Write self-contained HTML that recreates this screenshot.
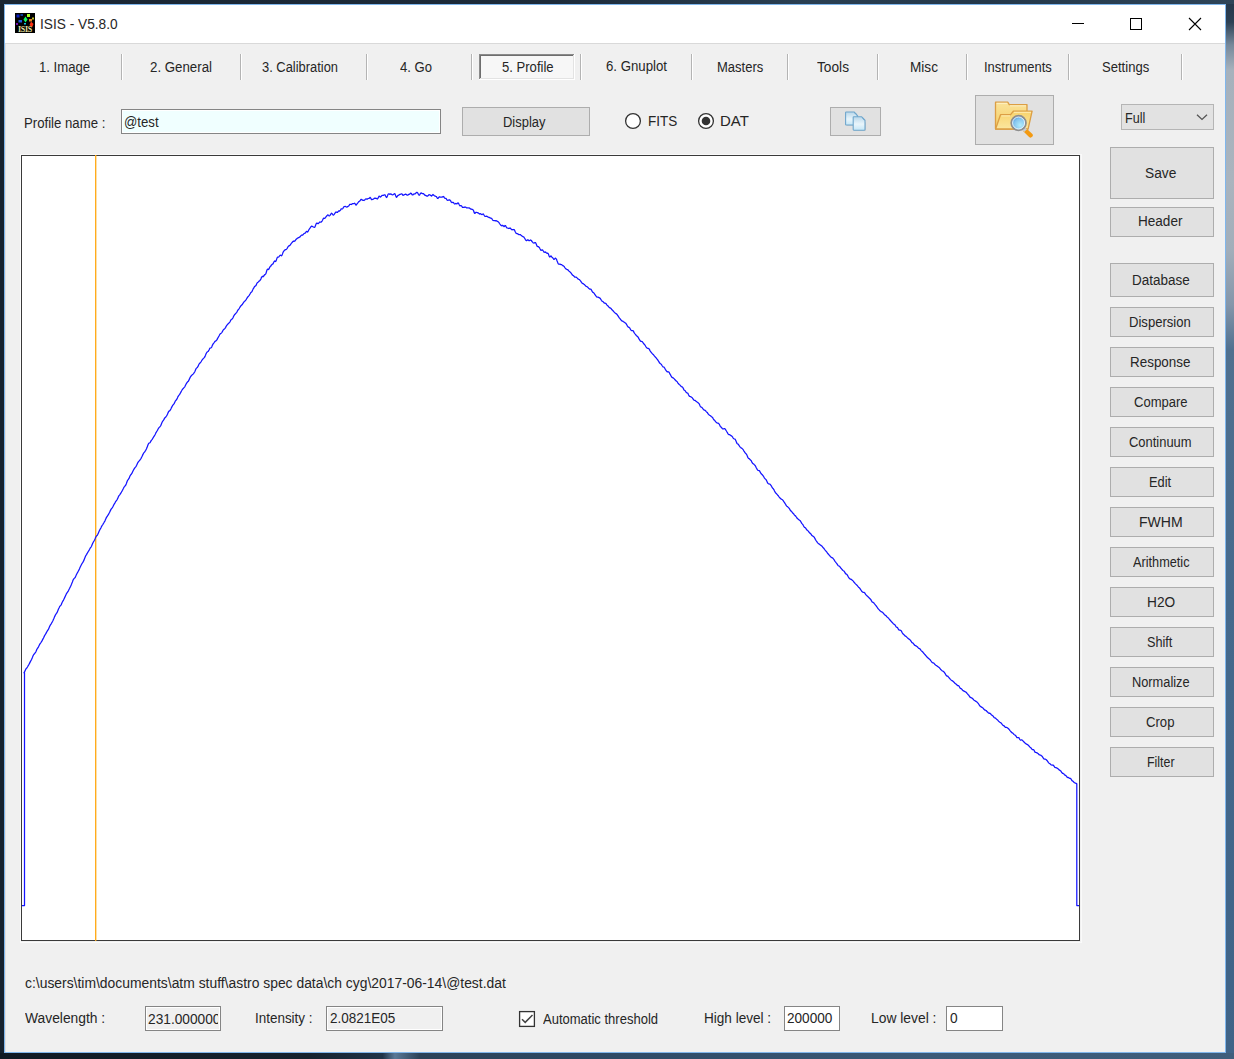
<!DOCTYPE html>
<html><head><meta charset="utf-8"><title>ISIS</title>
<style>
html,body{margin:0;padding:0;width:1234px;height:1059px;overflow:hidden;}
body{position:relative;background:#1b2a3a;}
.t{position:absolute;font-family:"Liberation Sans",sans-serif;white-space:pre;color:#262626;transform-origin:0 0;}
.a{position:absolute;box-sizing:border-box;}
.btn{position:absolute;box-sizing:border-box;border:1px solid #adadad;background:#e1e1e1;}
.sep{position:absolute;top:54px;width:2px;height:26px;border-left:1px solid #b4b4b4;border-right:1px solid #fff;box-sizing:border-box;}
.tb{position:absolute;box-sizing:border-box;border:1px solid #858585;box-shadow:inset 0 0 0 1px #fff;}
</style></head><body>
<!-- desktop background -->
<div class="a" style="left:0;top:0;width:1234px;height:1059px;background:linear-gradient(90deg,#16222e 0%,#1c2c3c 40%,#24394d 70%,#3a5572 100%);"></div>
<div class="a" style="left:1226px;top:0;width:8px;height:1059px;background:linear-gradient(180deg,#24364a 0px,#2c4054 22px,#76889a 45px,#a6b1bc 70px,#aab4be 180px,#a2aeba 250px,#8496aa 305px,#50708f 350px,#45698c 600px,#3f6387 1059px);"></div>
<div class="a" style="left:0;top:1053px;width:1234px;height:6px;background:linear-gradient(90deg,#101a24 0%,#15222e 25%,#1f3348 31%,#5a7896 32%,#2b4258 34%,#2e4a66 50%,#3b5a78 75%,#3f5e7c 100%);"></div>
<div class="a" style="left:0;top:0;width:1234px;height:4px;background:linear-gradient(90deg,#1a2633 0%,#1d2b3a 45%,#2a3f52 65%,#24384a 80%,#2e4458 100%);"></div>

<!-- window -->
<div class="a" style="left:4px;top:4px;width:1222px;height:1049px;border:1px solid #7fb6ec;background:#f0f0f0;"></div>
<div class="a" style="left:5px;top:5px;width:1220px;height:38px;background:#fff;"></div>
<div class="a" style="left:5px;top:43px;width:1220px;height:1px;background:#d9d9d9;"></div>
<div class="a" style="left:5px;top:44px;width:1px;height:1008px;background:#e3e0dc;"></div>

<!-- title icon -->
<svg class="a" style="left:15px;top:13px" width="20" height="20" viewBox="0 0 20 20">
<rect x="0" y="0" width="20" height="20" fill="#000"/>
<rect x="1.5" y="1.5" width="3" height="3" fill="#0a1fc0"/>
<rect x="5.5" y="1" width="2.5" height="2" fill="#0b3a9a"/>
<rect x="12" y="1" width="3" height="3" fill="#a8ff20"/>
<path d="M10.5 3.5 L12.5 6.5 L10.5 9.5 L8.5 6.5Z" fill="#10ff60"/>
<rect x="14" y="6" width="3" height="2.5" fill="#e08020"/>
<rect x="17" y="4.5" width="2" height="2" fill="#c0c020"/>
<rect x="3.5" y="7" width="3.5" height="2.5" fill="#1a5ae0"/>
<rect x="1" y="10" width="2" height="2" fill="#7010b0"/>
<rect x="9" y="10" width="2" height="1.5" fill="#10c0e0"/>
<path d="M16 8.5 L18.5 11 L17 14.5 L14.5 12Z" fill="#ff3010"/>
<text x="3" y="18.5" font-family="Liberation Serif" font-size="8" font-weight="bold" fill="#e8e0a0" letter-spacing="-0.3">ISIS</text>
</svg>

<!-- title bar buttons -->
<div class="a" style="left:1072px;top:23px;width:12px;height:1px;background:#000;"></div>
<div class="a" style="left:1130px;top:18px;width:12px;height:12px;border:1px solid #000;"></div>
<svg class="a" style="left:1188px;top:17px" width="14" height="14" viewBox="0 0 14 14"><path d="M1 1 L13 13 M13 1 L1 13" stroke="#000" stroke-width="1.1"/></svg>

<!-- tab separators -->
<div class="sep" style="left:121px"></div>
<div class="sep" style="left:240px"></div>
<div class="sep" style="left:366px"></div>
<div class="sep" style="left:471px"></div>
<div class="sep" style="left:580px"></div>
<div class="sep" style="left:691px"></div>
<div class="sep" style="left:787px"></div>
<div class="sep" style="left:877px"></div>
<div class="sep" style="left:966px"></div>
<div class="sep" style="left:1068px"></div>
<div class="sep" style="left:1181px"></div>

<!-- pressed tab -->
<div class="a" style="left:479px;top:54px;width:96px;height:26px;background:#fff;"></div>
<div class="a" style="left:479px;top:54px;width:95px;height:25px;background:#8a8a8a;"></div>
<div class="a" style="left:480px;top:55px;width:94px;height:24px;background:#e3e3e3;"></div>
<div class="a" style="left:480px;top:55px;width:93px;height:23px;background:#6e6e6e;"></div>
<div class="a" style="left:481px;top:56px;width:92px;height:22px;background:#f7f7f7;"></div>

<!-- profile name textbox -->
<div class="tb" style="left:121px;top:109px;width:320px;height:25px;background:#f0ffff;"></div>
<!-- Display button -->
<div class="btn" style="left:462px;top:107px;width:128px;height:29px;"></div>

<!-- radios -->
<svg class="a" style="left:624px;top:112px" width="18" height="18" viewBox="0 0 18 18"><circle cx="9" cy="9" r="7.4" fill="#fff" stroke="#333" stroke-width="1.3"/></svg>
<svg class="a" style="left:697px;top:112px" width="18" height="18" viewBox="0 0 18 18"><circle cx="9" cy="9" r="7.4" fill="#fff" stroke="#333" stroke-width="1.3"/><circle cx="9" cy="9" r="4.3" fill="#333"/></svg>

<!-- copy button -->
<div class="btn" style="left:830px;top:107px;width:51px;height:29px;"></div>
<svg class="a" style="left:843px;top:110px" width="25" height="23" viewBox="0 0 25 23">
<defs><linearGradient id="dg" x1="0" y1="0" x2="0" y2="1"><stop offset="0" stop-color="#b9d7ea"/><stop offset="0.55" stop-color="#e9f5fb"/><stop offset="1" stop-color="#c4e6f7"/></linearGradient></defs>
<path d="M3 3.5 H11 L14.5 7 V15 H3Z" fill="#000" opacity="0.12" transform="translate(0.8,0.8)"/>
<path d="M2.6 2.5 Q2.6 2 3.2 2 H11.2 L14.6 5.6 V14.4 Q14.6 15 14 15 H3.2 Q2.6 15 2.6 14.4Z" fill="url(#dg)" stroke="#6fa6cc" stroke-width="1.1"/>
<path d="M11.5 3 Q13.8 3.3 13.7 5.5" fill="none" stroke="#6fa6cc" stroke-width="0.9"/>
<path d="M10 8.5 H18.5 L22 12 V20 H10Z" fill="#000" opacity="0.12" transform="translate(0.8,0.8)"/>
<path d="M10.2 7.2 Q10.2 6.7 10.8 6.7 H18.6 L22 10.3 V19.6 Q22 20.2 21.4 20.2 H10.8 Q10.2 20.2 10.2 19.6Z" fill="url(#dg)" stroke="#6fa6cc" stroke-width="1.1"/>
<path d="M18.9 7.7 Q21.1 8 21.1 10.2" fill="none" stroke="#6fa6cc" stroke-width="0.9"/>
</svg>

<!-- folder button -->
<div class="btn" style="left:975px;top:95px;width:79px;height:50px;"></div>
<svg class="a" style="left:994px;top:100px" width="40" height="38" viewBox="0 0 40 38">
<defs>
<linearGradient id="fg" x1="0" y1="0" x2="0" y2="1"><stop offset="0" stop-color="#fbe39a"/><stop offset="1" stop-color="#f4cd62"/></linearGradient>
<linearGradient id="fg2" x1="0" y1="0" x2="0" y2="1"><stop offset="0" stop-color="#f8d36c"/><stop offset="1" stop-color="#fbe69e"/></linearGradient>
<radialGradient id="mg" cx="0.62" cy="0.65" r="0.7"><stop offset="0" stop-color="#b2ecfb"/><stop offset="0.6" stop-color="#86c6ee"/><stop offset="1" stop-color="#4d97e0"/></radialGradient>
</defs>
<path d="M1.5 2.2 H13.9 L15.2 4.6 H33 V29 H1.5Z" fill="url(#fg)" stroke="#dc9e44" stroke-width="1.3" stroke-linejoin="round"/>
<path d="M2.6 3.3 H13.2 M16 5.8 H32" stroke="#fff4cc" stroke-width="0.9"/>
<path d="M1.6 29 L6.5 14.7 H16.6 L19.4 11.1 H38.1 L34.1 29Z" fill="url(#fg2)" stroke="#dc9e44" stroke-width="1.3" stroke-linejoin="round"/>
<path d="M7.4 15.9 H16 M20 12.3 H37" stroke="#fff0c0" stroke-width="0.9"/>
<path d="M31 30 L36.6 35.3" stroke="#f39a12" stroke-width="4.4" stroke-linecap="round"/>
<path d="M29.6 28.6 L31.6 30.6" stroke="#c9cdd2" stroke-width="4" stroke-linecap="butt"/>
<circle cx="24.6" cy="23" r="7.3" fill="url(#mg)" stroke="#8e8e8e" stroke-width="1.9"/>
<circle cx="24.6" cy="23" r="6" fill="none" stroke="#eef6fb" stroke-width="0.9"/>
</svg>

<!-- combobox -->
<div class="a" style="left:1121px;top:104px;width:93px;height:26px;border:1px solid #b5b5b5;background:#e2e2e2;"></div>
<svg class="a" style="left:1195px;top:112px" width="14" height="10" viewBox="0 0 14 10"><path d="M2 2.8 L7 7.4 L12 2.8" fill="none" stroke="#555" stroke-width="1.3"/></svg>

<!-- right column buttons -->
<div class="btn" style="left:1110px;top:147px;width:104px;height:52px;"></div>
<div class="btn" style="left:1110px;top:207px;width:104px;height:30px;"></div>
<div class="btn" style="left:1110px;top:263px;width:104px;height:34px;"></div>
<div class="btn" style="left:1110px;top:307px;width:104px;height:30px;"></div>
<div class="btn" style="left:1110px;top:347px;width:104px;height:30px;"></div>
<div class="btn" style="left:1110px;top:387px;width:104px;height:30px;"></div>
<div class="btn" style="left:1110px;top:427px;width:104px;height:30px;"></div>
<div class="btn" style="left:1110px;top:467px;width:104px;height:30px;"></div>
<div class="btn" style="left:1110px;top:507px;width:104px;height:30px;"></div>
<div class="btn" style="left:1110px;top:547px;width:104px;height:30px;"></div>
<div class="btn" style="left:1110px;top:587px;width:104px;height:30px;"></div>
<div class="btn" style="left:1110px;top:627px;width:104px;height:30px;"></div>
<div class="btn" style="left:1110px;top:667px;width:104px;height:30px;"></div>
<div class="btn" style="left:1110px;top:707px;width:104px;height:30px;"></div>
<div class="btn" style="left:1110px;top:747px;width:104px;height:30px;"></div>

<!-- chart -->
<div class="a" style="left:20px;top:154px;width:1062px;height:789px;border:1px solid #fafafa;"></div>
<div class="a" style="left:21px;top:155px;width:1059px;height:786px;border:1px solid #3a3a3a;background:#fff;"></div>
<svg class="a" style="left:0;top:0" width="1234" height="1059" viewBox="0 0 1234 1059">
<line x1="95.7" y1="155" x2="95.7" y2="941" stroke="#ffaa18" stroke-width="1.35"/>
<polyline points="22,905.5 24.5,905.5 24.5,672.8 24.0,672.8 24.5,671.9 25.0,670.9 25.5,669.8 26.0,668.9 26.5,668.2 27.0,667.7 27.5,667.0 28.0,666.0 28.5,665.1 29.0,664.3 29.5,663.4 30.0,662.4 30.5,661.4 31.0,660.5 31.5,659.6 32.0,658.4 32.5,657.2 33.0,655.9 33.5,655.0 34.0,654.2 34.5,653.7 35.0,653.0 35.5,652.5 36.0,651.5 36.5,650.3 37.0,649.1 37.5,648.4 38.0,647.6 38.5,646.8 39.0,645.7 39.5,644.7 40.0,643.9 40.5,643.2 41.0,642.5 41.5,641.7 42.0,640.9 42.5,639.9 43.0,638.9 43.5,638.0 44.0,636.9 44.5,635.9 45.0,635.0 45.5,634.2 46.0,633.4 46.5,632.4 47.0,631.5 47.5,630.6 48.0,630.0 48.5,629.2 49.0,628.0 49.5,626.8 50.0,625.7 50.5,624.9 51.0,624.1 51.5,623.2 52.0,622.4 52.5,621.5 53.0,620.5 53.5,619.3 54.0,618.2 54.5,616.9 55.0,615.9 55.5,614.8 56.0,614.0 56.5,613.4 57.0,612.7 57.5,611.6 58.0,610.3 58.5,609.0 59.0,608.0 59.5,606.9 60.0,606.2 60.5,605.6 61.0,605.1 61.5,604.1 62.0,602.8 62.5,601.8 63.0,600.9 63.5,600.1 64.0,599.0 64.5,597.9 65.0,596.9 65.5,595.8 66.0,594.7 66.5,593.6 67.0,592.8 67.5,592.1 68.0,591.5 68.5,590.6 69.0,589.5 69.5,588.5 70.0,587.4 70.5,586.6 71.0,585.4 71.5,584.3 72.0,582.9 72.5,581.7 73.0,580.3 73.5,579.3 74.0,578.6 74.5,578.1 75.0,577.7 75.5,576.9 76.0,575.6 76.5,574.5 77.0,573.5 77.5,572.7 78.0,571.7 78.5,570.8 79.0,569.9 79.5,568.8 80.0,567.6 80.5,566.5 81.0,565.5 81.5,564.5 82.0,563.7 82.5,562.8 83.0,562.2 83.5,561.1 84.0,560.1 84.5,558.7 85.0,557.5 85.5,556.3 86.0,555.3 86.5,554.6 87.0,553.6 87.5,552.9 88.0,551.9 88.5,551.3 89.0,550.4 89.5,549.5 90.0,548.5 90.5,547.7 91.0,547.1 91.5,546.2 92.0,545.1 92.5,543.8 93.0,542.7 93.5,541.8 94.0,541.0 94.5,540.0 95.0,538.9 95.5,537.7 96.0,536.8 96.5,536.0 97.0,535.6 97.5,534.8 98.0,533.9 98.5,532.7 99.0,531.5 99.5,530.4 100.0,529.5 100.5,528.7 101.0,527.7 101.5,526.6 102.0,525.7 102.5,525.0 103.0,524.3 103.5,523.3 104.0,522.5 104.5,521.6 105.0,520.8 105.5,519.6 106.0,518.4 106.5,517.4 107.0,516.6 107.5,516.0 108.0,515.2 108.5,514.4 109.0,513.3 109.5,512.5 110.0,511.4 110.5,510.4 111.0,509.4 111.5,508.7 112.0,508.1 112.5,507.3 113.0,506.5 113.5,505.4 114.0,504.5 114.5,503.6 115.0,502.8 115.5,501.9 116.0,501.2 116.5,500.5 117.0,499.8 117.5,498.9 118.0,497.7 118.5,496.5 119.0,495.6 119.5,495.1 120.0,494.4 120.5,493.6 121.0,492.8 121.5,492.0 122.0,491.2 122.5,490.3 123.0,489.2 123.5,488.3 124.0,487.2 124.5,486.6 125.0,485.9 125.5,485.5 126.0,484.6 126.5,483.3 127.0,481.8 127.5,480.5 128.0,479.8 128.5,479.1 129.0,478.4 129.5,477.2 130.0,476.0 130.5,475.1 131.0,474.5 131.5,474.0 132.0,473.2 132.5,472.1 133.0,471.0 133.5,470.0 134.0,469.1 134.5,468.3 135.0,467.6 135.5,467.1 136.0,466.4 136.5,465.6 137.0,464.4 137.5,463.3 138.0,462.4 138.5,461.7 139.0,461.1 139.5,460.4 140.0,460.0 140.5,459.2 141.0,458.6 141.5,457.4 142.0,456.5 142.5,455.4 143.0,454.4 143.5,453.3 144.0,452.7 144.5,452.1 145.0,451.3 145.5,450.6 146.0,449.7 146.5,448.8 147.0,447.6 147.5,446.2 148.0,444.8 148.5,443.7 149.0,443.1 149.5,443.0 150.0,442.7 150.5,441.9 151.0,440.9 151.5,440.1 152.0,439.6 152.5,438.9 153.0,438.0 153.5,437.1 154.0,436.4 154.5,435.7 155.0,434.8 155.5,433.8 156.0,432.6 156.5,431.9 157.0,431.0 157.5,430.3 158.0,429.2 158.5,428.3 159.0,427.6 159.5,427.1 160.0,426.7 160.5,426.0 161.0,425.1 161.5,423.8 162.0,422.6 162.5,421.5 163.0,420.8 163.5,420.1 164.0,419.4 164.5,418.4 165.0,417.7 165.5,417.2 166.0,416.7 166.5,416.0 167.0,415.1 167.5,414.2 168.0,412.9 168.5,411.9 169.0,411.1 169.5,410.9 170.0,410.5 170.5,409.7 171.0,408.7 171.5,407.6 172.0,406.6 172.5,405.7 173.0,405.0 173.5,404.4 174.0,403.9 174.5,402.9 175.0,401.8 175.5,400.8 176.0,400.2 176.5,399.7 177.0,398.9 177.5,397.8 178.0,396.6 178.5,395.8 179.0,395.2 179.5,394.6 180.0,393.7 180.5,392.9 181.0,391.9 181.5,391.0 182.0,390.0 182.5,389.3 183.0,388.7 183.5,388.2 184.0,387.6 184.5,387.1 185.0,386.3 185.5,385.3 186.0,384.3 186.5,383.4 187.0,382.6 187.5,382.0 188.0,381.6 188.5,381.0 189.0,379.9 189.5,378.9 190.0,377.7 190.5,376.9 191.0,376.1 191.5,375.5 192.0,375.1 192.5,374.6 193.0,374.2 193.5,373.6 194.0,372.9 194.5,372.1 195.0,371.2 195.5,370.0 196.0,368.8 196.5,368.0 197.0,367.7 197.5,367.3 198.0,366.4 198.5,365.2 199.0,364.2 199.5,363.5 200.0,363.1 200.5,362.5 201.0,361.8 201.5,361.0 202.0,360.2 202.5,359.5 203.0,358.9 203.5,358.4 204.0,357.9 204.5,357.4 205.0,356.4 205.5,355.2 206.0,353.9 206.5,353.0 207.0,352.2 207.5,351.8 208.0,351.5 208.5,351.0 209.0,350.0 209.5,348.9 210.0,348.2 210.5,348.0 211.0,347.9 211.5,347.4 212.0,346.3 212.5,345.1 213.0,344.1 213.5,343.4 214.0,342.8 214.5,342.0 215.0,341.5 215.5,341.0 216.0,340.8 216.5,340.3 217.0,339.6 217.5,338.6 218.0,337.7 218.5,336.9 219.0,336.0 219.5,335.0 220.0,334.2 220.5,333.6 221.0,333.3 221.5,332.9 222.0,332.3 222.5,331.4 223.0,330.3 223.5,329.7 224.0,329.2 224.5,328.9 225.0,328.3 225.5,327.6 226.0,326.6 226.5,325.7 227.0,325.1 227.5,324.5 228.0,324.0 228.5,323.3 229.0,323.0 229.5,322.5 230.0,321.8 230.5,320.7 231.0,319.9 231.5,319.3 232.0,319.2 232.5,318.5 233.0,317.8 233.5,316.5 234.0,315.6 234.5,314.7 235.0,314.2 235.5,313.8 236.0,313.2 236.5,312.6 237.0,311.8 237.5,310.9 238.0,310.0 238.5,309.4 239.0,308.8 239.5,308.0 240.0,307.2 240.5,306.4 241.0,305.7 241.5,305.2 242.0,304.7 242.5,304.2 243.0,303.3 243.5,302.6 244.0,301.9 244.5,301.3 245.0,301.0 245.5,300.4 246.0,299.9 246.5,299.0 247.0,298.2 247.5,297.4 248.0,296.7 248.5,296.2 249.0,295.6 249.5,294.9 250.0,294.0 250.5,292.9 251.0,292.5 251.5,292.1 252.0,291.6 252.5,290.3 253.0,289.3 253.5,288.2 254.0,287.7 254.5,286.6 255.0,286.2 255.5,285.9 256.0,285.5 256.5,284.3 257.0,283.2 257.5,282.5 258.0,282.2 258.5,281.8 259.0,281.3 259.5,280.8 260.0,280.4 260.5,279.6 261.0,278.8 261.5,277.3 262.0,276.7 262.5,276.3 263.0,276.8 263.5,276.3 264.0,275.8 264.5,274.9 265.0,274.6 265.5,274.1 266.0,273.3 266.5,271.5 267.0,270.0 267.5,269.2 268.0,269.3 268.5,269.5 269.0,268.9 269.5,267.7 270.0,266.9 270.5,266.2 271.0,266.0 271.5,264.8 272.0,264.6 272.5,264.0 273.0,263.9 273.5,262.7 274.0,261.8 274.5,261.0 275.0,261.2 275.5,261.5 276.0,261.1 276.5,259.6 277.0,258.1 277.5,257.2 278.0,257.1 278.5,257.1 279.0,256.7 279.5,256.0 280.0,255.3 280.5,255.2 281.0,255.5 281.5,255.8 282.0,255.2 282.5,253.9 283.0,252.5 283.5,251.5 284.0,250.9 284.5,250.3 285.0,249.9 285.5,249.6 286.0,249.6 286.5,249.2 287.0,248.6 287.5,247.7 288.0,246.8 288.5,246.1 289.0,245.9 289.5,245.7 290.0,245.3 290.5,244.7 291.0,243.8 291.5,243.2 292.0,242.6 292.5,242.0 293.0,241.5 293.5,241.1 294.0,241.3 294.5,241.2 295.0,240.9 295.5,240.1 296.0,239.5 296.5,238.9 297.0,238.6 297.5,238.2 298.0,238.0 298.5,237.5 299.0,237.5 299.5,237.1 300.0,236.9 300.5,236.1 301.0,235.7 301.5,235.1 302.0,235.2 302.5,235.1 303.0,234.8 303.5,234.2 304.0,233.5 304.5,233.3 305.0,233.2 305.5,232.7 306.0,232.0 306.5,231.4 307.0,231.7 307.5,232.0 308.0,231.5 308.5,230.5 309.0,229.5 309.5,228.8 310.0,228.1 310.5,227.2 311.0,226.7 311.5,226.1 312.0,226.3 312.5,226.4 313.0,226.9 313.5,227.0 314.0,227.3 314.5,227.3 315.0,226.9 315.5,225.5 316.0,224.1 316.5,223.2 317.0,223.2 317.5,223.4 318.0,223.7 318.5,223.4 319.0,222.9 319.5,222.2 320.0,222.0 320.5,222.1 321.0,222.2 321.5,221.8 322.0,221.1 322.5,220.2 323.0,219.2 323.5,218.4 324.0,218.1 324.5,218.3 325.0,218.1 325.5,217.7 326.0,216.7 326.5,216.3 327.0,215.6 327.5,215.1 328.0,214.8 328.5,215.4 329.0,215.9 329.5,215.9 330.0,215.4 330.5,214.6 331.0,213.9 331.5,213.2 332.0,213.5 332.5,214.2 333.0,215.0 333.5,215.1 334.0,214.6 334.5,213.9 335.0,213.1 335.5,212.5 336.0,212.0 336.5,212.2 337.0,212.4 337.5,212.4 338.0,211.6 338.5,211.1 339.0,210.8 339.5,211.1 340.0,210.6 340.5,210.1 341.0,209.1 341.5,208.8 342.0,208.8 342.5,208.9 343.0,208.3 343.5,207.3 344.0,206.8 344.5,206.5 345.0,206.4 345.5,206.4 346.0,206.9 346.5,207.0 347.0,207.0 347.5,206.5 348.0,206.5 348.5,206.1 349.0,205.7 349.5,204.8 350.0,204.3 350.5,204.3 351.0,204.4 351.5,204.5 352.0,204.1 352.5,203.7 353.0,203.6 353.5,203.5 354.0,203.5 354.5,203.2 355.0,203.6 355.5,204.5 356.0,205.1 356.5,204.8 357.0,203.9 357.5,203.3 358.0,202.7 358.5,202.0 359.0,201.5 359.5,201.2 360.0,200.8 360.5,200.0 361.0,199.4 361.5,199.3 362.0,199.9 362.5,200.1 363.0,200.3 363.5,200.3 364.0,200.5 364.5,200.1 365.0,199.7 365.5,199.0 366.0,198.9 366.5,198.9 367.0,199.3 367.5,199.0 368.0,198.6 368.5,198.5 369.0,198.3 369.5,198.1 370.0,197.4 370.5,197.7 371.0,198.6 371.5,199.7 372.0,199.6 372.5,199.5 373.0,199.2 373.5,199.1 374.0,198.6 374.5,198.2 375.0,198.3 375.5,198.2 376.0,198.3 376.5,198.3 377.0,198.9 377.5,199.0 378.0,198.2 378.5,197.2 379.0,196.2 379.5,196.4 380.0,196.7 380.5,197.0 381.0,196.5 381.5,196.0 382.0,195.4 382.5,195.4 383.0,195.3 383.5,195.4 384.0,194.9 384.5,194.8 385.0,194.9 385.5,195.9 386.0,196.8 386.5,197.5 387.0,197.0 387.5,195.8 388.0,194.4 388.5,193.8 389.0,193.9 389.5,194.1 390.0,194.3 390.5,193.9 391.0,194.2 391.5,194.2 392.0,194.7 392.5,194.8 393.0,194.8 393.5,194.5 394.0,194.0 394.5,193.7 395.0,193.9 395.5,195.2 396.0,196.6 396.5,197.3 397.0,196.8 397.5,196.0 398.0,195.4 398.5,195.3 399.0,194.9 399.5,194.7 400.0,194.3 400.5,194.3 401.0,194.0 401.5,193.8 402.0,194.0 402.5,194.6 403.0,195.3 403.5,195.1 404.0,195.0 404.5,194.6 405.0,194.4 405.5,194.1 406.0,194.3 406.5,194.6 407.0,195.1 407.5,195.0 408.0,195.0 408.5,194.4 409.0,194.4 409.5,194.0 410.0,194.0 410.5,193.2 411.0,193.3 411.5,193.6 412.0,194.7 412.5,194.9 413.0,194.9 413.5,194.2 414.0,194.1 414.5,193.9 415.0,193.9 415.5,193.5 416.0,192.9 416.5,192.4 417.0,192.4 417.5,192.7 418.0,193.5 418.5,194.5 419.0,195.2 419.5,195.2 420.0,194.3 420.5,193.4 421.0,192.9 421.5,193.1 422.0,193.4 422.5,193.6 423.0,193.6 423.5,193.7 424.0,194.3 424.5,194.8 425.0,195.3 425.5,195.4 426.0,195.7 426.5,195.9 427.0,196.2 427.5,196.1 428.0,195.8 428.5,195.2 429.0,194.7 429.5,194.8 430.0,194.9 430.5,195.4 431.0,195.6 431.5,196.1 432.0,195.5 432.5,194.9 433.0,194.5 433.5,194.9 434.0,195.5 434.5,195.8 435.0,196.1 435.5,196.2 436.0,196.5 436.5,196.7 437.0,197.6 437.5,198.3 438.0,198.5 438.5,197.6 439.0,197.1 439.5,196.8 440.0,197.2 440.5,197.1 441.0,197.2 441.5,197.1 442.0,197.1 442.5,196.9 443.0,196.6 443.5,196.5 444.0,197.0 444.5,197.8 445.0,198.4 445.5,198.4 446.0,198.4 446.5,199.1 447.0,200.0 447.5,200.3 448.0,200.3 448.5,200.0 449.0,200.1 449.5,199.8 450.0,200.1 450.5,200.6 451.0,201.8 451.5,202.3 452.0,202.6 452.5,202.3 453.0,202.3 453.5,202.5 454.0,203.3 454.5,204.0 455.0,203.9 455.5,203.5 456.0,203.4 456.5,203.8 457.0,203.8 457.5,203.2 458.0,202.9 458.5,203.2 459.0,204.2 459.5,205.1 460.0,205.8 460.5,205.7 461.0,205.7 461.5,205.8 462.0,206.7 462.5,207.4 463.0,207.5 463.5,207.4 464.0,207.2 464.5,207.3 465.0,207.0 465.5,207.2 466.0,207.4 466.5,207.9 467.0,207.8 467.5,207.9 468.0,207.9 468.5,208.0 469.0,207.9 469.5,208.1 470.0,208.5 470.5,208.9 471.0,209.1 471.5,209.2 472.0,209.4 472.5,209.4 473.0,209.8 473.5,210.5 474.0,212.1 474.5,213.1 475.0,213.4 475.5,212.7 476.0,212.3 476.5,212.3 477.0,212.5 477.5,212.8 478.0,212.6 478.5,213.2 479.0,213.5 479.5,214.0 480.0,213.7 480.5,213.7 481.0,214.0 481.5,214.5 482.0,214.6 482.5,214.3 483.0,213.9 483.5,214.0 484.0,215.0 484.5,215.8 485.0,216.4 485.5,216.4 486.0,216.4 486.5,216.2 487.0,216.3 487.5,216.5 488.0,217.2 488.5,217.2 489.0,217.5 489.5,217.4 490.0,217.8 490.5,218.2 491.0,218.2 491.5,218.3 492.0,218.9 492.5,219.8 493.0,220.4 493.5,220.5 494.0,220.5 494.5,220.6 495.0,220.6 495.5,220.8 496.0,220.7 496.5,220.9 497.0,221.1 497.5,221.5 498.0,221.7 498.5,222.1 499.0,222.6 499.5,223.5 500.0,224.2 500.5,224.8 501.0,225.4 501.5,225.6 502.0,225.8 502.5,225.3 503.0,225.6 503.5,226.0 504.0,226.7 504.5,226.3 505.0,225.5 505.5,225.6 506.0,226.5 506.5,227.5 507.0,227.9 507.5,228.0 508.0,228.2 508.5,228.5 509.0,228.4 509.5,228.4 510.0,227.8 510.5,228.5 511.0,228.8 511.5,229.6 512.0,229.6 512.5,229.7 513.0,229.8 513.5,229.5 514.0,229.6 514.5,230.0 515.0,231.2 515.5,232.3 516.0,233.2 516.5,233.4 517.0,233.6 517.5,233.6 518.0,234.1 518.5,234.4 519.0,234.7 519.5,234.6 520.0,234.6 520.5,234.7 521.0,235.2 521.5,235.5 522.0,236.2 522.5,236.3 523.0,236.7 523.5,236.8 524.0,237.3 524.5,238.0 525.0,238.8 525.5,239.8 526.0,240.4 526.5,240.7 527.0,240.2 527.5,239.9 528.0,239.8 528.5,240.3 529.0,240.7 529.5,240.6 530.0,240.4 530.5,240.0 531.0,240.3 531.5,240.6 532.0,241.6 532.5,242.0 533.0,242.7 533.5,243.0 534.0,243.1 534.5,242.8 535.0,242.5 535.5,242.6 536.0,243.5 536.5,244.7 537.0,246.1 537.5,246.4 538.0,246.7 538.5,246.6 539.0,247.3 539.5,247.8 540.0,248.8 540.5,249.7 541.0,250.4 541.5,250.2 542.0,250.1 542.5,249.9 543.0,250.6 543.5,251.2 544.0,252.1 544.5,252.2 545.0,252.4 545.5,252.0 546.0,252.5 546.5,252.9 547.0,253.3 547.5,253.2 548.0,253.3 548.5,254.2 549.0,255.8 549.5,256.9 550.0,256.9 550.5,256.2 551.0,256.0 551.5,256.5 552.0,257.3 552.5,257.6 553.0,258.2 553.5,259.0 554.0,259.4 554.5,259.0 555.0,258.5 555.5,258.1 556.0,258.7 556.5,259.3 557.0,260.7 557.5,261.9 558.0,263.4 558.5,264.0 559.0,264.3 559.5,264.2 560.0,264.2 560.5,264.4 561.0,264.6 561.5,264.6 562.0,265.0 562.5,265.3 563.0,265.8 563.5,265.9 564.0,266.4 564.5,267.0 565.0,267.8 565.5,268.4 566.0,269.0 566.5,269.2 567.0,269.5 567.5,269.5 568.0,270.0 568.5,270.5 569.0,271.2 569.5,271.5 570.0,271.9 570.5,272.4 571.0,273.0 571.5,273.7 572.0,274.5 572.5,275.1 573.0,275.5 573.5,275.7 574.0,276.2 574.5,276.9 575.0,277.2 575.5,277.2 576.0,277.2 576.5,277.4 577.0,277.9 577.5,278.4 578.0,279.0 578.5,279.2 579.0,279.5 579.5,279.7 580.0,280.3 580.5,280.9 581.0,281.6 581.5,282.4 582.0,283.0 582.5,283.4 583.0,283.6 583.5,283.9 584.0,284.3 584.5,284.6 585.0,285.2 585.5,285.7 586.0,286.2 586.5,286.5 587.0,286.7 587.5,287.0 588.0,287.4 588.5,288.1 589.0,288.6 589.5,289.0 590.0,289.0 590.5,289.0 591.0,289.3 591.5,290.1 592.0,291.2 592.5,292.0 593.0,292.4 593.5,292.6 594.0,293.2 594.5,294.0 595.0,294.6 595.5,295.3 596.0,296.0 596.5,296.8 597.0,297.0 597.5,297.1 598.0,297.2 598.5,297.4 599.0,297.6 599.5,297.8 600.0,298.3 600.5,298.8 601.0,299.7 601.5,300.5 602.0,301.2 602.5,301.3 603.0,301.6 603.5,302.1 604.0,302.8 604.5,303.2 605.0,303.2 605.5,303.3 606.0,303.6 606.5,304.3 607.0,305.1 607.5,305.6 608.0,306.0 608.5,306.5 609.0,307.2 609.5,307.7 610.0,307.9 610.5,308.1 611.0,308.5 611.5,309.1 612.0,309.8 612.5,310.2 613.0,310.8 613.5,311.3 614.0,311.9 614.5,312.3 615.0,312.9 615.5,313.3 616.0,313.7 616.5,313.9 617.0,314.5 617.5,315.1 618.0,315.9 618.5,316.7 619.0,317.5 619.5,318.1 620.0,318.6 620.5,319.3 621.0,320.0 621.5,320.6 622.0,320.9 622.5,321.1 623.0,321.3 623.5,321.7 624.0,322.0 624.5,322.5 625.0,322.8 625.5,323.1 626.0,323.5 626.5,324.3 627.0,325.3 627.5,326.3 628.0,326.9 628.5,327.1 629.0,327.4 629.5,327.7 630.0,328.5 630.5,329.3 631.0,330.1 631.5,330.6 632.0,330.7 632.5,330.6 633.0,330.7 633.5,331.4 634.0,332.4 634.5,333.3 635.0,333.9 635.5,334.4 636.0,335.1 636.5,335.8 637.0,336.1 637.5,336.5 638.0,337.0 638.5,337.9 639.0,338.9 639.5,339.7 640.0,340.5 640.5,341.1 641.0,341.3 641.5,341.4 642.0,341.5 642.5,342.0 643.0,342.7 643.5,343.5 644.0,344.0 644.5,344.5 645.0,345.2 645.5,346.0 646.0,346.8 646.5,347.5 647.0,348.0 647.5,348.3 648.0,348.4 648.5,348.4 649.0,348.8 649.5,349.6 650.0,350.6 650.5,351.5 651.0,352.1 651.5,352.7 652.0,353.3 652.5,353.9 653.0,354.3 653.5,354.8 654.0,355.4 654.5,356.1 655.0,356.7 655.5,357.3 656.0,357.7 656.5,358.3 657.0,359.0 657.5,359.8 658.0,360.3 658.5,361.2 659.0,361.9 659.5,362.9 660.0,363.2 660.5,363.7 661.0,364.0 661.5,364.7 662.0,365.5 662.5,366.2 663.0,366.8 663.5,367.0 664.0,367.2 664.5,367.8 665.0,368.7 665.5,369.6 666.0,370.4 666.5,371.0 667.0,371.6 667.5,371.9 668.0,371.9 668.5,371.8 669.0,372.2 669.5,373.0 670.0,374.2 670.5,374.9 671.0,375.9 671.5,376.6 672.0,377.4 672.5,377.6 673.0,377.8 673.5,378.1 674.0,378.6 674.5,379.1 675.0,379.8 675.5,380.3 676.0,380.9 676.5,381.1 677.0,381.6 677.5,382.2 678.0,383.1 678.5,383.8 679.0,384.2 679.5,384.7 680.0,385.0 680.5,385.7 681.0,386.3 681.5,386.7 682.0,386.8 682.5,387.0 683.0,387.8 683.5,388.9 684.0,389.9 684.5,390.3 685.0,390.6 685.5,391.1 686.0,392.1 686.5,392.7 687.0,392.9 687.5,393.0 688.0,393.5 688.5,394.7 689.0,395.8 689.5,396.3 690.0,396.5 690.5,396.6 691.0,396.8 691.5,397.2 692.0,397.5 692.5,398.2 693.0,398.9 693.5,399.7 694.0,400.1 694.5,400.3 695.0,400.4 695.5,400.7 696.0,401.2 696.5,401.6 697.0,402.0 697.5,402.3 698.0,402.7 698.5,403.1 699.0,403.7 699.5,404.4 700.0,405.7 700.5,406.6 701.0,407.1 701.5,407.2 702.0,407.6 702.5,408.2 703.0,408.9 703.5,409.5 704.0,410.0 704.5,410.1 705.0,410.3 705.5,410.7 706.0,411.4 706.5,411.9 707.0,412.3 707.5,412.8 708.0,413.6 708.5,414.3 709.0,414.8 709.5,415.2 710.0,415.5 710.5,415.8 711.0,416.2 711.5,416.7 712.0,417.0 712.5,417.4 713.0,418.3 713.5,419.1 714.0,420.0 714.5,420.2 715.0,420.9 715.5,421.3 716.0,422.1 716.5,422.6 717.0,423.0 717.5,423.1 718.0,423.2 718.5,423.4 719.0,423.9 719.5,424.6 720.0,425.9 720.5,426.6 721.0,427.2 721.5,427.4 722.0,428.2 722.5,428.7 723.0,429.0 723.5,428.9 724.0,428.7 724.5,428.7 725.0,428.9 725.5,429.5 726.0,430.3 726.5,431.0 727.0,432.0 727.5,432.9 728.0,433.8 728.5,434.4 729.0,434.6 729.5,434.7 730.0,434.9 730.5,435.3 731.0,435.7 731.5,435.9 732.0,436.3 732.5,436.9 733.0,437.8 733.5,438.5 734.0,438.8 734.5,439.0 735.0,439.2 735.5,439.9 736.0,441.0 736.5,442.4 737.0,443.4 737.5,443.8 738.0,444.0 738.5,444.6 739.0,445.3 739.5,446.1 740.0,446.8 740.5,447.4 741.0,447.9 741.5,448.1 742.0,448.5 742.5,448.8 743.0,449.5 743.5,450.2 744.0,451.1 744.5,451.9 745.0,452.7 745.5,453.3 746.0,453.7 746.5,454.3 747.0,455.3 747.5,456.6 748.0,457.6 748.5,458.3 749.0,458.5 749.5,459.1 750.0,459.5 750.5,460.0 751.0,460.4 751.5,461.3 752.0,462.4 752.5,463.2 753.0,463.6 753.5,463.9 754.0,464.3 754.5,464.9 755.0,465.3 755.5,466.1 756.0,467.2 756.5,468.1 757.0,469.2 757.5,469.8 758.0,470.4 758.5,470.5 759.0,470.6 759.5,470.9 760.0,471.7 760.5,472.7 761.0,473.5 761.5,474.1 762.0,474.5 762.5,475.0 763.0,475.6 763.5,476.3 764.0,477.2 764.5,478.1 765.0,478.7 765.5,479.1 766.0,479.6 766.5,480.4 767.0,481.5 767.5,482.7 768.0,483.5 768.5,483.8 769.0,483.9 769.5,484.0 770.0,484.3 770.5,484.8 771.0,485.4 771.5,486.3 772.0,487.1 772.5,488.0 773.0,488.4 773.5,489.1 774.0,489.8 774.5,491.0 775.0,491.9 775.5,492.8 776.0,493.2 776.5,493.7 777.0,494.3 777.5,494.9 778.0,495.6 778.5,496.0 779.0,496.8 779.5,497.4 780.0,498.1 780.5,498.5 781.0,498.9 781.5,499.2 782.0,499.5 782.5,499.8 783.0,500.4 783.5,501.1 784.0,501.9 784.5,502.6 785.0,503.4 785.5,504.1 786.0,505.2 786.5,505.9 787.0,506.3 787.5,506.6 788.0,507.1 788.5,507.6 789.0,508.1 789.5,508.9 790.0,509.7 790.5,510.6 791.0,510.9 791.5,511.5 792.0,512.0 792.5,512.7 793.0,513.2 793.5,513.7 794.0,514.4 794.5,515.1 795.0,515.6 795.5,515.9 796.0,516.6 796.5,517.2 797.0,518.1 797.5,518.4 798.0,519.0 798.5,519.4 799.0,519.9 799.5,520.2 800.0,520.5 800.5,521.1 801.0,522.0 801.5,523.0 802.0,523.6 802.5,524.1 803.0,524.8 803.5,525.8 804.0,526.6 804.5,527.3 805.0,527.5 805.5,527.9 806.0,528.6 806.5,529.5 807.0,530.1 807.5,530.5 808.0,530.8 808.5,531.4 809.0,532.1 809.5,532.9 810.0,533.1 810.5,533.5 811.0,534.1 811.5,535.0 812.0,535.6 812.5,536.0 813.0,536.2 813.5,536.5 814.0,537.0 814.5,537.7 815.0,538.6 815.5,539.6 816.0,540.5 816.5,541.2 817.0,541.9 817.5,542.6 818.0,543.2 818.5,543.6 819.0,543.9 819.5,544.3 820.0,544.7 820.5,545.1 821.0,545.4 821.5,545.8 822.0,546.2 822.5,546.9 823.0,547.5 823.5,548.0 824.0,548.5 824.5,549.3 825.0,550.0 825.5,550.7 826.0,551.1 826.5,551.7 827.0,552.3 827.5,553.1 828.0,553.8 828.5,554.3 829.0,554.9 829.5,555.5 830.0,556.0 830.5,556.7 831.0,557.1 831.5,557.5 832.0,557.5 832.5,557.9 833.0,558.3 833.5,559.0 834.0,559.7 834.5,560.5 835.0,561.3 835.5,561.9 836.0,562.6 836.5,563.2 837.0,563.9 837.5,564.7 838.0,565.4 838.5,565.8 839.0,566.0 839.5,566.3 840.0,566.9 840.5,567.7 841.0,568.3 841.5,568.8 842.0,569.4 842.5,570.1 843.0,570.5 843.5,570.8 844.0,571.0 844.5,571.8 845.0,572.6 845.5,573.6 846.0,573.9 846.5,574.2 847.0,574.6 847.5,575.3 848.0,576.3 848.5,577.1 849.0,578.0 849.5,578.4 850.0,579.0 850.5,579.1 851.0,579.3 851.5,579.4 852.0,580.0 852.5,580.4 853.0,580.9 853.5,581.4 854.0,582.2 854.5,582.7 855.0,583.4 855.5,583.9 856.0,584.4 856.5,584.9 857.0,585.2 857.5,585.8 858.0,586.5 858.5,587.2 859.0,587.6 859.5,588.0 860.0,588.6 860.5,589.4 861.0,590.2 861.5,590.8 862.0,591.6 862.5,592.0 863.0,592.3 863.5,592.4 864.0,592.4 864.5,592.7 865.0,593.2 865.5,594.1 866.0,594.9 866.5,595.4 867.0,595.9 867.5,596.2 868.0,596.8 868.5,597.2 869.0,597.8 869.5,598.2 870.0,598.7 870.5,599.2 871.0,599.9 871.5,600.9 872.0,601.7 872.5,602.2 873.0,602.3 873.5,602.7 874.0,603.1 874.5,603.8 875.0,604.4 875.5,605.1 876.0,605.6 876.5,606.3 877.0,607.0 877.5,607.9 878.0,608.5 878.5,609.1 879.0,609.6 879.5,610.2 880.0,610.7 880.5,611.1 881.0,611.6 881.5,611.8 882.0,612.0 882.5,612.3 883.0,612.8 883.5,613.5 884.0,614.0 884.5,614.7 885.0,615.0 885.5,615.4 886.0,615.6 886.5,616.3 887.0,617.0 887.5,617.3 888.0,617.7 888.5,618.0 889.0,618.9 889.5,619.4 890.0,620.1 890.5,620.4 891.0,621.2 891.5,621.7 892.0,622.3 892.5,622.7 893.0,623.3 893.5,624.0 894.0,624.2 894.5,624.5 895.0,624.9 895.5,625.8 896.0,626.7 896.5,627.1 897.0,627.3 897.5,627.6 898.0,628.5 898.5,629.5 899.0,630.0 899.5,630.2 900.0,630.2 900.5,630.3 901.0,630.6 901.5,631.2 902.0,632.3 902.5,633.1 903.0,633.9 903.5,634.2 904.0,634.7 904.5,635.3 905.0,635.9 905.5,636.2 906.0,636.4 906.5,636.9 907.0,637.4 907.5,637.9 908.0,638.3 908.5,638.8 909.0,639.1 909.5,639.4 910.0,639.8 910.5,640.4 911.0,641.2 911.5,642.0 912.0,642.6 912.5,642.8 913.0,643.1 913.5,643.7 914.0,644.5 914.5,645.1 915.0,645.4 915.5,645.6 916.0,645.9 916.5,646.2 917.0,646.5 917.5,646.9 918.0,647.6 918.5,648.1 919.0,648.4 919.5,648.5 920.0,649.0 920.5,649.6 921.0,650.3 921.5,650.9 922.0,651.3 922.5,651.8 923.0,652.3 923.5,653.0 924.0,653.5 924.5,654.2 925.0,654.6 925.5,655.3 926.0,655.8 926.5,656.5 927.0,656.9 927.5,657.7 928.0,657.9 928.5,658.4 929.0,658.7 929.5,659.2 930.0,659.6 930.5,660.3 931.0,661.0 931.5,661.7 932.0,662.2 932.5,662.6 933.0,662.9 933.5,662.9 934.0,663.3 934.5,663.9 935.0,664.6 935.5,665.0 936.0,665.3 936.5,665.5 937.0,665.9 937.5,666.5 938.0,666.7 938.5,667.1 939.0,667.3 939.5,667.9 940.0,668.5 940.5,669.2 941.0,669.7 941.5,670.1 942.0,670.7 942.5,671.0 943.0,671.2 943.5,671.5 944.0,672.0 944.5,672.7 945.0,673.4 945.5,674.3 946.0,675.2 946.5,675.8 947.0,676.1 947.5,676.1 948.0,676.4 948.5,677.1 949.0,677.7 949.5,678.4 950.0,678.8 950.5,679.4 951.0,679.9 951.5,680.3 952.0,680.6 952.5,680.9 953.0,681.3 953.5,681.7 954.0,682.3 954.5,682.8 955.0,683.4 955.5,683.7 956.0,684.1 956.5,684.5 957.0,685.0 957.5,685.5 958.0,685.5 958.5,685.6 959.0,686.1 959.5,687.0 960.0,688.0 960.5,688.4 961.0,688.6 961.5,688.8 962.0,689.5 962.5,690.1 963.0,690.7 963.5,690.9 964.0,691.1 964.5,691.3 965.0,691.6 965.5,691.8 966.0,692.2 966.5,692.6 967.0,693.4 967.5,693.9 968.0,694.5 968.5,694.9 969.0,695.7 969.5,696.5 970.0,697.1 970.5,697.4 971.0,697.6 971.5,697.9 972.0,698.1 972.5,698.5 973.0,699.0 973.5,699.6 974.0,700.2 974.5,700.5 975.0,700.8 975.5,701.1 976.0,701.4 976.5,701.7 977.0,702.1 977.5,702.6 978.0,703.1 978.5,703.8 979.0,704.5 979.5,705.5 980.0,706.0 980.5,706.4 981.0,706.7 981.5,707.2 982.0,707.4 982.5,707.7 983.0,708.1 983.5,708.6 984.0,709.4 984.5,709.7 985.0,710.2 985.5,710.1 986.0,710.6 986.5,710.9 987.0,711.6 987.5,711.9 988.0,712.5 988.5,712.9 989.0,713.3 989.5,713.2 990.0,713.4 990.5,713.7 991.0,714.4 991.5,714.8 992.0,715.3 992.5,715.5 993.0,716.0 993.5,716.7 994.0,717.4 994.5,717.8 995.0,717.8 995.5,718.2 996.0,718.6 996.5,719.2 997.0,719.5 997.5,719.9 998.0,720.4 998.5,721.1 999.0,721.6 999.5,722.0 1000.0,722.3 1000.5,722.5 1001.0,722.9 1001.5,723.5 1002.0,724.2 1002.5,724.9 1003.0,725.4 1003.5,725.6 1004.0,725.8 1004.5,726.3 1005.0,727.0 1005.5,727.4 1006.0,727.4 1006.5,727.3 1007.0,727.5 1007.5,728.0 1008.0,728.3 1008.5,728.8 1009.0,729.3 1009.5,729.9 1010.0,730.6 1010.5,731.1 1011.0,731.8 1011.5,732.3 1012.0,732.8 1012.5,732.9 1013.0,733.3 1013.5,733.9 1014.0,734.5 1014.5,734.8 1015.0,735.0 1015.5,735.4 1016.0,736.2 1016.5,737.0 1017.0,737.6 1017.5,737.7 1018.0,737.6 1018.5,737.6 1019.0,737.9 1019.5,738.8 1020.0,739.6 1020.5,740.2 1021.0,740.0 1021.5,739.8 1022.0,740.0 1022.5,740.5 1023.0,740.9 1023.5,741.4 1024.0,742.0 1024.5,742.6 1025.0,743.0 1025.5,743.4 1026.0,743.9 1026.5,744.1 1027.0,744.3 1027.5,744.5 1028.0,745.0 1028.5,745.6 1029.0,746.0 1029.5,746.6 1030.0,747.2 1030.5,747.6 1031.0,748.0 1031.5,748.5 1032.0,749.3 1032.5,749.6 1033.0,749.6 1033.5,749.6 1034.0,750.2 1034.5,751.1 1035.0,752.1 1035.5,752.4 1036.0,752.5 1036.5,752.5 1037.0,752.9 1037.5,753.1 1038.0,753.6 1038.5,754.0 1039.0,754.6 1039.5,754.9 1040.0,755.0 1040.5,755.1 1041.0,755.4 1041.5,755.8 1042.0,756.2 1042.5,756.9 1043.0,757.7 1043.5,758.5 1044.0,759.0 1044.5,759.1 1045.0,759.2 1045.5,759.2 1046.0,759.5 1046.5,760.0 1047.0,760.5 1047.5,761.1 1048.0,761.8 1048.5,762.6 1049.0,763.2 1049.5,763.5 1050.0,763.8 1050.5,764.2 1051.0,764.7 1051.5,765.0 1052.0,765.2 1052.5,765.0 1053.0,765.1 1053.5,765.3 1054.0,766.1 1054.5,766.9 1055.0,767.5 1055.5,767.6 1056.0,767.7 1056.5,767.8 1057.0,768.1 1057.5,768.3 1058.0,768.8 1058.5,769.2 1059.0,769.8 1059.5,770.2 1060.0,770.4 1060.5,770.8 1061.0,771.3 1061.5,772.2 1062.0,772.7 1062.5,773.4 1063.0,773.4 1063.5,773.7 1064.0,774.1 1064.5,774.7 1065.0,775.2 1065.5,775.4 1066.0,775.7 1066.5,776.4 1067.0,777.0 1067.5,777.5 1068.0,777.4 1068.5,777.7 1069.0,777.9 1069.5,778.3 1070.0,778.3 1070.5,778.4 1071.0,779.0 1071.5,779.8 1072.0,780.6 1072.5,780.9 1073.0,781.3 1073.5,781.8 1074.0,782.4 1074.5,782.7 1075.0,783.0 1075.5,783.1 1076.0,783.3 1076.5,783.6 1076.8,783.8 1076.8,905.5 1079,905.5" fill="none" stroke="#1414ff" stroke-width="1.25" stroke-linejoin="round"/>
</svg>

<!-- bottom textboxes -->
<div class="tb" style="left:145px;top:1006px;width:76px;height:25px;background:#f0f0f0;"></div>
<div class="tb" style="left:326px;top:1006px;width:117px;height:25px;background:#f0f0f0;"></div>
<div class="tb" style="left:784px;top:1006px;width:56px;height:25px;background:#fff;"></div>
<div class="tb" style="left:946px;top:1006px;width:57px;height:25px;background:#fff;"></div>
<!-- clipped wavelength text -->
<div class="a" style="left:147px;top:1008px;width:71px;height:21px;overflow:hidden;">
<div class="t" id="wl" style="left:0.8px;top:3.2px;font-size:15.5px;line-height:15.5px;transform:scaleX(0.885);">231.000000</div>
</div>

<!-- checkbox -->
<svg class="a" style="left:518px;top:1010px" width="18" height="18" viewBox="0 0 18 18"><rect x="1.6" y="1.6" width="14.8" height="14.8" fill="#fff" stroke="#333" stroke-width="1.3"/><path d="M4 9.3 L7.2 12.4 L14.5 5" fill="none" stroke="#444" stroke-width="1.5"/></svg>

<div class="t" style="left:39.57px;top:16.10px;font-size:15px;line-height:15px;transform:scaleX(0.9128);">ISIS - V5.8.0</div>
<div class="t" style="left:38.68px;top:58.58px;font-size:15.5px;line-height:15.5px;transform:scaleX(0.8472);">1. Image</div>
<div class="t" style="left:150.34px;top:58.68px;font-size:15.5px;line-height:15.5px;transform:scaleX(0.8565);">2. General</div>
<div class="t" style="left:262.21px;top:58.68px;font-size:15.5px;line-height:15.5px;transform:scaleX(0.8323);">3. Calibration</div>
<div class="t" style="left:399.64px;top:58.68px;font-size:15.5px;line-height:15.5px;transform:scaleX(0.8450);">4. Go</div>
<div class="t" style="left:501.88px;top:59.48px;font-size:15.5px;line-height:15.5px;transform:scaleX(0.8435);">5. Profile</div>
<div class="t" style="left:605.54px;top:58.48px;font-size:15.5px;line-height:15.5px;transform:scaleX(0.8534);">6. Gnuplot</div>
<div class="t" style="left:716.96px;top:58.68px;font-size:15.5px;line-height:15.5px;transform:scaleX(0.8387);">Masters</div>
<div class="t" style="left:817.43px;top:58.68px;font-size:15.5px;line-height:15.5px;transform:scaleX(0.8839);">Tools</div>
<div class="t" style="left:910.31px;top:58.68px;font-size:15.5px;line-height:15.5px;transform:scaleX(0.8777);">Misc</div>
<div class="t" style="left:984.03px;top:58.68px;font-size:15.5px;line-height:15.5px;transform:scaleX(0.8368);">Instruments</div>
<div class="t" style="left:1102.18px;top:58.68px;font-size:15.5px;line-height:15.5px;transform:scaleX(0.8430);">Settings</div>
<div class="t" style="left:24.45px;top:114.58px;font-size:15.5px;line-height:15.5px;transform:scaleX(0.8503);">Profile name :</div>
<div class="t" style="left:124.38px;top:113.78px;font-size:15.5px;line-height:15.5px;transform:scaleX(0.8496);">@test</div>
<div class="t" style="left:503.26px;top:113.78px;font-size:15.5px;line-height:15.5px;transform:scaleX(0.8350);">Display</div>
<div class="t" style="left:647.92px;top:113.48px;font-size:15.5px;line-height:15.5px;transform:scaleX(0.8720);">FITS</div>
<div class="t" style="left:720.30px;top:113.48px;font-size:15.5px;line-height:15.5px;transform:scaleX(0.9651);">DAT</div>
<div class="t" style="left:1125.49px;top:109.78px;font-size:15.5px;line-height:15.5px;transform:scaleX(0.8124);">Full</div>
<div class="t" style="left:25.14px;top:974.68px;font-size:15.5px;line-height:15.5px;transform:scaleX(0.8959);">c:\users\tim\documents\atm stuff\astro spec data\ch cyg\2017-06-14\@test.dat</div>
<div class="t" style="left:25.30px;top:1009.98px;font-size:15.5px;line-height:15.5px;transform:scaleX(0.8924);">Wavelength :</div>
<div class="t" style="left:255.29px;top:1009.68px;font-size:15.5px;line-height:15.5px;transform:scaleX(0.8666);">Intensity :</div>
<div class="t" style="left:329.53px;top:1009.68px;font-size:15.5px;line-height:15.5px;transform:scaleX(0.8690);">2.0821E05</div>
<div class="t" style="left:543.00px;top:1011.08px;font-size:15.5px;line-height:15.5px;transform:scaleX(0.8397);">Automatic threshold</div>
<div class="t" style="left:704.32px;top:1009.88px;font-size:15.5px;line-height:15.5px;transform:scaleX(0.8748);">High level :</div>
<div class="t" style="left:786.82px;top:1009.88px;font-size:15.5px;line-height:15.5px;transform:scaleX(0.8772);">200000</div>
<div class="t" style="left:871.49px;top:1009.88px;font-size:15.5px;line-height:15.5px;transform:scaleX(0.8934);">Low level :</div>
<div class="t" style="left:1144.65px;top:164.78px;font-size:15.5px;line-height:15.5px;transform:scaleX(0.8873);">Save</div>
<div class="t" style="left:1138.02px;top:213.48px;font-size:15.5px;line-height:15.5px;transform:scaleX(0.8746);">Header</div>
<div class="t" style="left:1131.92px;top:272.48px;font-size:15.5px;line-height:15.5px;transform:scaleX(0.8691);">Database</div>
<div class="t" style="left:1129.15px;top:313.68px;font-size:15.5px;line-height:15.5px;transform:scaleX(0.8437);">Dispersion</div>
<div class="t" style="left:1130.23px;top:353.68px;font-size:15.5px;line-height:15.5px;transform:scaleX(0.8662);">Response</div>
<div class="t" style="left:1133.65px;top:393.58px;font-size:15.5px;line-height:15.5px;transform:scaleX(0.8412);">Compare</div>
<div class="t" style="left:1129.15px;top:433.68px;font-size:15.5px;line-height:15.5px;transform:scaleX(0.8346);">Continuum</div>
<div class="t" style="left:1149.17px;top:473.68px;font-size:15.5px;line-height:15.5px;transform:scaleX(0.8274);">Edit</div>
<div class="t" style="left:1139.28px;top:513.68px;font-size:15.5px;line-height:15.5px;transform:scaleX(0.9055);">FWHM</div>
<div class="t" style="left:1132.80px;top:553.68px;font-size:15.5px;line-height:15.5px;transform:scaleX(0.8208);">Arithmetic</div>
<div class="t" style="left:1146.80px;top:593.68px;font-size:15.5px;line-height:15.5px;transform:scaleX(0.8833);">H2O</div>
<div class="t" style="left:1147.39px;top:633.68px;font-size:15.5px;line-height:15.5px;transform:scaleX(0.8183);">Shift</div>
<div class="t" style="left:1131.78px;top:673.68px;font-size:15.5px;line-height:15.5px;transform:scaleX(0.8254);">Normalize</div>
<div class="t" style="left:1146.34px;top:713.68px;font-size:15.5px;line-height:15.5px;transform:scaleX(0.8462);">Crop</div>
<div class="t" style="left:1147.31px;top:753.68px;font-size:15.5px;line-height:15.5px;transform:scaleX(0.8000);">Filter</div>
<div class="t" style="left:950.09px;top:1009.88px;font-size:15.5px;line-height:15.5px;transform:scaleX(0.8850);">0</div>
</body></html>
